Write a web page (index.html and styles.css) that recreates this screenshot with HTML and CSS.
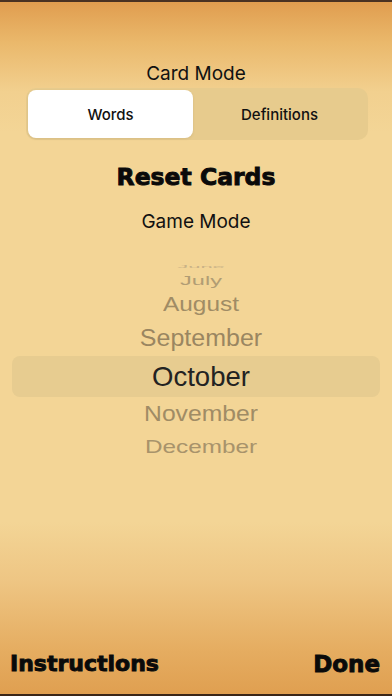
FILE: index.html
```html
<!DOCTYPE html>
<html>
<head>
<meta charset="utf-8">
<link rel="stylesheet" href="styles.css">
</head>
<body>
<div class="screen">
  <div class="label label-card">Card Mode</div>
  <div class="segmented">
    <div class="seg seg-active">Words</div>
    <div class="seg">Definitions</div>
  </div>
  <div class="reset">Reset Cards</div>
  <div class="label label-game">Game Mode</div>
  <div class="picker">
    <div class="pick p-june"><span>June</span></div>
    <div class="pick p-july"><span>July</span></div>
    <div class="pick p-aug"><span>August</span></div>
    <div class="pick p-sep"><span>September</span></div>
    <div class="pick p-oct"><span>October</span></div>
    <div class="pick p-nov"><span>November</span></div>
    <div class="pick p-dec"><span>December</span></div>
  </div>
  <div class="spacer"></div>
  <div class="footer">
    <div class="foot-btn">Instructions</div>
    <div class="foot-btn">Done</div>
  </div>
</div>
</body>
</html>
```
FILE: styles.css
```css
html, body {
  margin: 0;
  padding: 0;
}
body {
  width: 392px;
  height: 696px;
  overflow: hidden;
}
.screen {
  box-sizing: border-box;
  width: 392px;
  height: 696px;
  display: flex;
  flex-direction: column;
  border-top: 2px solid #4a3222;
  border-bottom: 2px solid #3a2618;
  background: linear-gradient(to bottom,
    #e09d4f 0px,
    #eab86b 40px,
    #f2d08f 90px,
    #f3d596 130px,
    #f3d596 520px,
    #eec583 580px,
    #e5ac60 650px,
    #df9e4f 696px);
  font-family: Inter, "Noto Sans", sans-serif;
  color: #111;
}
.label {
  text-align: center;
  font-size: 19px;
  line-height: 24px;
  color: #111;
}
.label-card {
  margin-top: 60px;
}
.segmented {
  margin: 2px 24px 0 26px;
  height: 52px;
  box-sizing: border-box;
  padding: 2px;
  border-radius: 10px;
  background: #e7cb8d;
  display: flex;
}
.seg {
  flex: 1;
  display: flex;
  align-items: center;
  justify-content: center;
  font-size: 15px;
  font-weight: 500;
  color: #111;
  border-radius: 8px;
}
.seg-active {
  flex: 0 0 165px;
  background: #ffffff;
  box-shadow: 0 1px 3px rgba(0,0,0,0.08);
}
.reset {
  margin-top: 21px;
  text-align: center;
  font-family: "DejaVu Sans", sans-serif;
  font-weight: 700;
  font-size: 23.5px;
  line-height: 32px;
  -webkit-text-stroke: 0.9px #0a0a0a;
  color: #0a0a0a;
}
.label-game {
  margin-top: 17px;
}
.picker {
  margin-top: 28px;
  display: flex;
  flex-direction: column;
  font-family: "Liberation Sans", Arial, sans-serif;
}
.pick {
  display: flex;
  align-items: center;
  justify-content: center;
  padding-left: 10px;
  color: #9d8963;
  white-space: nowrap;
}
.pick span {
  display: inline-block;
}
.p-june {
  height: 10px;
  font-size: 22px;
  color: #c9b286;
}
.p-june span { transform: scaleY(0.15); }
.p-july {
  height: 18px;
  font-size: 23.5px;
  color: #b19d74;
}
.p-july span { transform: scaleY(0.52); }
.p-aug {
  height: 29px;
  font-size: 24.4px;
  color: #a08c65;
}
.p-aug span { transform: scaleY(0.8); }
.p-sep {
  height: 37px;
  font-size: 25px;
  color: #9a8661;
}
.p-sep span { transform: scaleY(0.96); }
.p-oct {
  height: 41px;
  margin: 0 12px;
  border-radius: 8px;
  background: #e7cc90;
  font-size: 27.5px;
  color: #222;
}
.p-nov {
  height: 34px;
  font-size: 24.7px;
  color: #a08c65;
}
.p-nov span { transform: scaleY(0.88); }
.p-dec {
  height: 31px;
  font-size: 24.3px;
  color: #a8936b;
}
.p-dec span { transform: scaleY(0.74); }
.spacer {
  flex: 1;
}
.footer {
  display: flex;
  justify-content: space-between;
  padding: 0 12px 16px 10px;
}
.foot-btn {
  font-family: "DejaVu Sans", sans-serif;
  font-weight: 700;
  font-size: 22px;
  line-height: 28px;
  -webkit-text-stroke: 0.9px #0a0a0a;
  color: #0a0a0a;
}
.foot-btn:last-child {
  font-size: 23px;
}
```
